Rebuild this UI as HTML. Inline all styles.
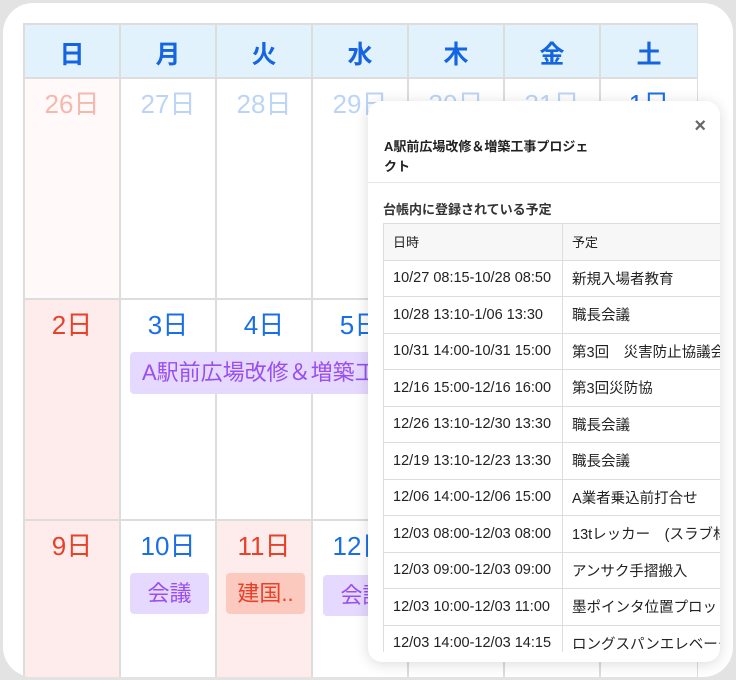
<!DOCTYPE html>
<html style="overflow:hidden;width:736px;height:680px"><head><meta charset="utf-8"><style>
*{box-sizing:border-box;margin:0;padding:0}
body{width:736px;height:680px;background:#e3e3e3;position:relative;overflow:hidden;font-family:"Liberation Sans","Noto Sans CJK JP",sans-serif}
.card{position:absolute;left:3px;top:3px;width:730px;height:674px;background:#fff;border-radius:30px;overflow:hidden}
.grid{position:absolute;left:20px;top:20px;width:675px;height:654px;border-left:2px solid #ddd;border-top:2px solid #ddd;overflow:hidden}
.c{position:absolute;border-right:2px solid #ddd;border-bottom:2px solid #ddd;text-align:center;font-size:26px;padding-top:5px}
.h{background:#e1f2fd;color:#1565e0;font-weight:bold;font-size:25px;padding-top:10px}
.b{color:#1a6fe8}.r{color:#e8412a}.lb{color:#bcd4f7}.lr{color:#f6b8ad}
.pop{position:absolute;left:368px;top:101px;width:352px;height:561px;background:#fff;border-radius:14px;box-shadow:0 2px 14px rgba(0,0,0,.15);overflow:hidden}
.ev{position:absolute;border-radius:4px;font-size:22px;text-align:center}
table{border-collapse:collapse;position:absolute;left:15px;top:122px;font-size:14.5px;color:#222;table-layout:fixed;width:340px}
td{border:1px solid #ddd;height:36.5px;padding-left:9px;white-space:nowrap;overflow:hidden}
</style></head><body>
<div class="card">
<div class="grid">
<div class="c h" style="left:0;top:0;width:96px;height:54px">日</div>
<div class="c h" style="left:96px;top:0;width:96px;height:54px">月</div>
<div class="c h" style="left:192px;top:0;width:96px;height:54px">火</div>
<div class="c h" style="left:288px;top:0;width:96px;height:54px">水</div>
<div class="c h" style="left:384px;top:0;width:96px;height:54px">木</div>
<div class="c h" style="left:480px;top:0;width:96px;height:54px">金</div>
<div class="c h" style="left:576px;top:0;width:98px;height:54px">土</div>

<div class="c lr" style="left:0;top:54px;width:96px;height:221px;background:#fff9f9">26日</div>
<div class="c lb" style="left:96px;top:54px;width:96px;height:221px">27日</div>
<div class="c lb" style="left:192px;top:54px;width:96px;height:221px">28日</div>
<div class="c lb" style="left:288px;top:54px;width:96px;height:221px">29日</div>
<div class="c lb" style="left:384px;top:54px;width:96px;height:221px">30日</div>
<div class="c lb" style="left:480px;top:54px;width:96px;height:221px">31日</div>
<div class="c b" style="left:576px;top:54px;width:98px;height:221px">1日</div>

<div class="c r" style="left:0;top:275px;width:96px;height:221px;background:#fdeceb">2日</div>
<div class="c b" style="left:96px;top:275px;width:96px;height:221px">3日</div>
<div class="c b" style="left:192px;top:275px;width:96px;height:221px">4日</div>
<div class="c b" style="left:288px;top:275px;width:96px;height:221px">5日</div>
<div class="c b" style="left:384px;top:275px;width:96px;height:221px"></div>
<div class="c b" style="left:480px;top:275px;width:96px;height:221px"></div>
<div class="c b" style="left:576px;top:275px;width:98px;height:221px"></div>

<div class="c r" style="left:0;top:496px;width:96px;height:158px;background:#fdeceb">9日</div>
<div class="c b" style="left:96px;top:496px;width:96px;height:158px">10日</div>
<div class="c r" style="left:192px;top:496px;width:96px;height:158px;background:#fdeceb">11日</div>
<div class="c b" style="left:288px;top:496px;width:96px;height:158px">12日</div>
<div class="c" style="left:384px;top:496px;width:96px;height:158px"></div>
<div class="c" style="left:480px;top:496px;width:96px;height:158px"></div>
<div class="c" style="left:576px;top:496px;width:98px;height:158px"></div>

<div class="ev" style="left:105px;top:327px;width:260px;height:42px;line-height:42px;background:#e6d9ff;color:#9a4ef0;text-align:left;padding-left:12px;white-space:nowrap;overflow:hidden">A駅前広場改修＆増築工事</div>
<div class="ev" style="left:105px;top:548px;width:79px;height:41px;line-height:41px;background:#e6d9ff;color:#9a4ef0">会議</div>
<div class="ev" style="left:201px;top:548px;width:79px;height:41px;line-height:41px;background:#fcc9bf;color:#e8412a">建国..</div>
<div class="ev" style="left:298px;top:550px;width:79px;height:41px;line-height:41px;background:#e6d9ff;color:#9a4ef0">会議</div>
</div>
</div>

<div class="pop">
<div style="position:absolute;right:14px;top:14px;font-size:20px;color:#666;font-weight:bold">×</div>
<div style="position:absolute;left:16px;top:36px;font-size:13px;font-weight:bold;color:#222;line-height:20px">A駅前広場改修＆増築工事プロジェ<br>クト</div>
<div style="position:absolute;left:0;top:81px;width:100%;border-top:1px solid #e6e6e6"></div>
<div style="position:absolute;left:15px;top:98px;font-size:13px;font-weight:bold;color:#333">台帳内に登録されている予定</div>
<table>
<colgroup><col style="width:179px"><col style="width:161px"></colgroup>
<tr style="background:#f7f7f7"><td style="font-size:13px">日時</td><td style="font-size:13px">予定</td></tr>
<tr><td>10/27 08:15-10/28 08:50</td><td>新規入場者教育</td></tr>
<tr><td>10/28 13:10-1/06 13:30</td><td>職長会議</td></tr>
<tr><td>10/31 14:00-10/31 15:00</td><td>第3回　災害防止協議会</td></tr>
<tr><td>12/16 15:00-12/16 16:00</td><td>第3回災防協</td></tr>
<tr><td>12/26 13:10-12/30 13:30</td><td>職長会議</td></tr>
<tr><td>12/19 13:10-12/23 13:30</td><td>職長会議</td></tr>
<tr><td>12/06 14:00-12/06 15:00</td><td>A業者乗込前打合せ</td></tr>
<tr><td>12/03 08:00-12/03 08:00</td><td>13tレッカー　(スラブ材</td></tr>
<tr><td>12/03 09:00-12/03 09:00</td><td>アンサク手摺搬入</td></tr>
<tr><td>12/03 10:00-12/03 11:00</td><td>墨ポインタ位置プロット</td></tr>
<tr><td>12/03 14:00-12/03 14:15</td><td>ロングスパンエレベーター</td></tr>
</table>
<div style="position:absolute;left:0;top:551px;width:100%;height:20px;background:#fff"></div>
</div>
</body></html>
